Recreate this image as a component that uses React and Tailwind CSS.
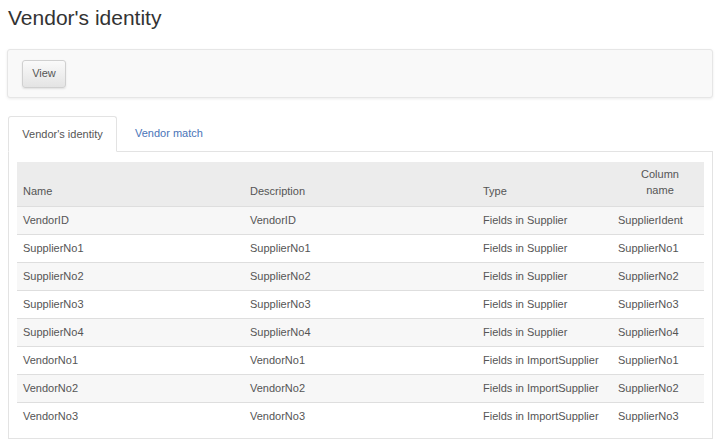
const rows = [
  ['VendorID', 'VendorID', 'Fields in Supplier', 'SupplierIdent'],
  ['SupplierNo1', 'SupplierNo1', 'Fields in Supplier', 'SupplierNo1'],
  ['SupplierNo2', 'SupplierNo2', 'Fields in Supplier', 'SupplierNo2'],
  ['SupplierNo3', 'SupplierNo3', 'Fields in Supplier', 'SupplierNo3'],
  ['SupplierNo4', 'SupplierNo4', 'Fields in Supplier', 'SupplierNo4'],
  ['VendorNo1', 'VendorNo1', 'Fields in ImportSupplier', 'SupplierNo1'],
  ['VendorNo2', 'VendorNo2', 'Fields in ImportSupplier', 'SupplierNo2'],
  ['VendorNo3', 'VendorNo3', 'Fields in ImportSupplier', 'SupplierNo3'],
];

export default function App() {
  return (
    <div className="w-[720px] h-[447px] bg-white overflow-hidden font-['Liberation_Sans',Arial,sans-serif] text-[#333] pl-[8px] pr-[7px]">
      {/* Page title */}
      <h1 className="text-[21px] leading-[24px] pt-[6px] text-[#333]">Vendor's identity</h1>

      {/* Toolbar */}
      <div className="mt-[19px] h-[49px] -ml-[1px] border border-[#e6e6e6] bg-[#f9f9f9] rounded-[3px] shadow-[0_1px_3px_rgba(0,0,0,0.08)] flex items-center px-[14px]">
        <button className="h-[28px] w-[44px] border border-[#d0d0d0] rounded-[3px] bg-gradient-to-b from-[#fafafa] to-[#e4e4e4] text-[11px] text-[#555] shadow-[0_1px_2px_rgba(0,0,0,0.1)]">
          View
        </button>
      </div>

      {/* Tabs */}
      <div className="mt-[18px] flex items-end border-b border-[#e3e3e3] h-[36px]">
        <div className="h-[36px] w-[109px] border border-[#e3e3e3] border-b-white -mb-[1px] bg-white rounded-t-[3px] flex items-center justify-center text-[11px] text-[#555]">
          Vendor's identity
        </div>
        <div className="h-[35px] px-[18px] flex items-center text-[11px] text-[#4a74b8]">Vendor match</div>
      </div>

      {/* Tab content */}
      <div className="border border-t-0 border-[#e3e3e3] px-[8px] pt-[10px] pb-[8px]">
        <table className="w-[687px] border-collapse text-[11px] leading-[14px] text-[#555] table-fixed">
          <colgroup>
            <col className="w-[224px]" />
            <col className="w-[234px]" />
            <col className="w-[137px]" />
            <col className="w-[92px]" />
          </colgroup>
          <thead>
            <tr className="bg-[#ececec] h-[44px]">
              <th className="text-left font-normal text-[#555] align-bottom px-[6px] pb-[8px]">Name</th>
              <th className="text-left font-normal text-[#555] align-bottom pl-[9px] pr-[8px] pb-[8px]">Description</th>
              <th className="text-left font-normal text-[#555] align-bottom px-[8px] pb-[8px]">Type</th>
              <th className="text-center font-normal text-[#555] align-bottom pl-[10px] pr-[6px] pb-[8px] leading-[16px]">
                Column
                <br />
                name
              </th>
            </tr>
          </thead>
          <tbody>
            {rows.map((r, i) => (
              <tr key={i} className={`h-[28px] border-t border-[#dedede] ${i % 2 === 0 ? 'bg-[#f7f7f7]' : 'bg-white'}`}>
                <td className="px-[6px] text-[#555]">{r[0]}</td>
                <td className="pl-[9px] pr-[8px] text-[#555]">{r[1]}</td>
                <td className="px-[8px] text-[#555]">{r[2]}</td>
                <td className="px-[6px] text-[#555] whitespace-nowrap">{r[3]}</td>
              </tr>
            ))}
          </tbody>
        </table>
      </div>
    </div>
  );
}
